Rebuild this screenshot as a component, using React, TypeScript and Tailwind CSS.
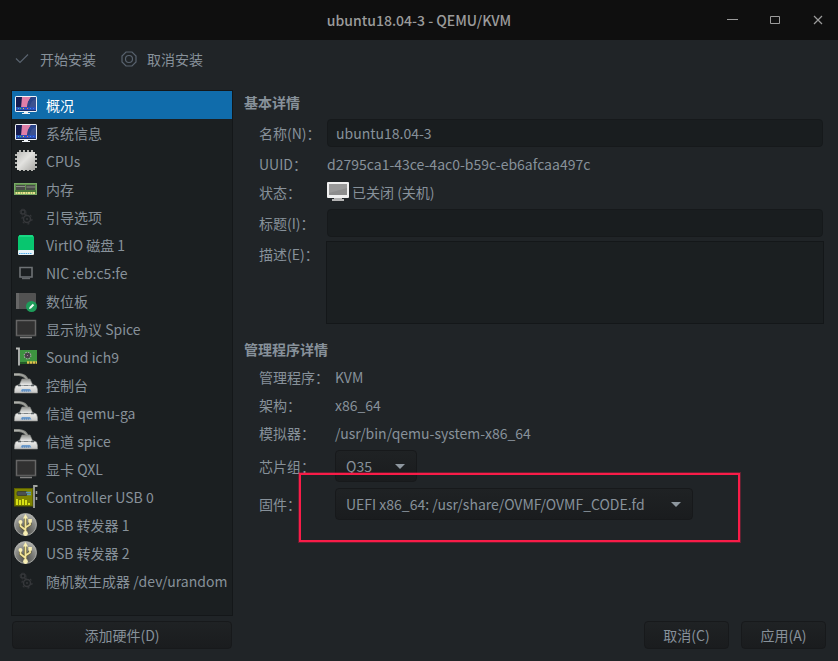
import { useState } from "react";
import type { ReactNode } from "react";

function Icon({ children }: { children: ReactNode }) {
  return (
    <svg viewBox="0 0 24 24" className="h-6 w-6 shrink-0" aria-hidden="true">
      {children}
    </svg>
  );
}

const ComputerIcon = () => (
  <Icon>
    <rect x="1" y="3" width="22" height="16" rx="1.5" fill="#eef2f7" />
    <rect x="2" y="4" width="20" height="14" fill="#1c2f6b" />
    <path d="M2 4h7L7 15H2z" fill="#151c50" />
    <path d="M8 4h9l-3 5-1 6H7z" fill="#df7fa8" />
    <path d="M17 4h5v11h-9l1-6z" fill="#2a4488" />
    <path d="M18 8l4-2v9h-7z" fill="#4a5c98" opacity=".6" />
    <rect x="2" y="14" width="20" height="3" fill="#2d52b8" />
    <g>
      <rect x="4" y="15" width="1" height="1" fill="#35d0d0" />
      <rect x="6" y="15" width="1" height="1" fill="#3fd45c" />
      <rect x="9" y="15" width="1" height="1" fill="#f3c545" />
      <rect x="11" y="15" width="1" height="1" fill="#3a36ff" />
      <rect x="13" y="15" width="1" height="1" fill="#ff7448" />
      <rect x="16" y="15" width="1" height="1" fill="#3c8cff" />
      <rect x="19" y="15" width="1" height="1" fill="#3c6cff" />
    </g>
    <path d="M10 19h4v1h2v1H8v-1h2z" fill="#eef2f7" />
  </Icon>
);

const CpuIcon = () => (
  <Icon>
    <defs>
      <linearGradient id="cpu" x1="0" y1="0" x2="1" y2="1">
        <stop offset="0" stopColor="#bdbdba" />
        <stop offset=".45" stopColor="#e2e2df" />
        <stop offset="1" stopColor="#aaa9a5" />
      </linearGradient>
    </defs>
    <path
      d="M6 1v21M10 1v21M14 1v21M18 1v21M1 6h22M1 10h22M1 14h22M1 18h22"
      stroke="#b4b5b1"
      strokeWidth="2"
    />
    <rect x="3" y="3" width="18" height="18" fill="url(#cpu)" />
  </Icon>
);

const MemoryIcon = () => (
  <Icon>
    <rect x=".5" y="6.500" width="22" height="11" fill="#5f8f4c" stroke="#78a866" />
    <rect x="2" y="8" width="19" height="5" fill="#484c47" />
    <path d="M2 9.500h9M12.500 10h9" stroke="#8b8f88" />
    <path d="M11.500 7v6" stroke="#5f8f4c" />
    <path d="M1 14h21" stroke="#35602a" />
    <path d="M1.500 16h20" stroke="#e6e08a" strokeWidth="2" strokeDasharray="2 .5" />
  </Icon>
);

const GearsIcon = () => (
  <Icon>
    <g fill="none" stroke="#35373a">
      <circle cx="9" cy="7" r="2" strokeWidth="1.500" />
      <circle cx="9" cy="7" r="3" strokeWidth="1" strokeDasharray="1.200 1.200" />
      <circle cx="13" cy="14" r="3.500" strokeWidth="1.500" />
      <circle cx="13" cy="14" r="5" strokeWidth="1.200" strokeDasharray="2 3.200" />
      <circle cx="13" cy="14" r=".7" />
    </g>
  </Icon>
);

const DiskIcon = () => (
  <Icon>
    <path d="M5.500 2h13L20 4v15.500H4V4z" fill="#08c66f" />
    <path d="M5.500 2h13L19.500 4h-15z" fill="#18d883" />
    <rect x="4" y="17" width="16" height="5" rx="1" fill="#e9f3f8" />
    <path d="M5 20.500h13" stroke="#4aa9e8" strokeDasharray="1.500 .7" />
  </Icon>
);

const NicIcon = () => (
  <Icon>
    <path d="M6 6.500h12v9.500H6z" fill="none" stroke="#6e7275" strokeWidth="1.600" />
    <path d="M8 17.500h8" stroke="#65696c" strokeWidth="1.400" />
  </Icon>
);

const TabletIcon = () => (
  <Icon>
    <rect x="2" y="4" width="20" height="16" rx="1" fill="#525252" />
    <rect x="2" y="4" width="3" height="16" fill="#666" />
    <circle cx="17.500" cy="17.500" r="5.500" fill="#1e9c5a" />
    <path d="M15 20l.6-2 3.200-3.200 1.400 1.400-3.200 3.200z" fill="#f2fff7" />
  </Icon>
);

const ScreenIcon = () => (
  <Icon>
    <rect x="2.500" y="3.500" width="19" height="15" fill="#313131" stroke="#666" strokeWidth="1.500" />
    <path d="M2 18.500h20" stroke="#5b5b5b" />
    <path d="M6 20.500h12" stroke="#838383" strokeWidth="1.500" />
  </Icon>
);

const SoundIcon = () => (
  <Icon>
    <path d="M2 3.500h3v17" fill="none" stroke="#b9bbb8" strokeWidth="1.800" />
    <path d="M6 5h17v12H6z" fill="#3d9440" />
    <path d="M6 17h7v2H6z" fill="#245c28" />
    <path d="M13 17.500h10" stroke="#dfc34a" strokeWidth="2.500" strokeDasharray="2.500 .5" />
    <circle cx="13.500" cy="10.500" r="3.300" fill="none" stroke="#b3a4b1" strokeWidth="1.200" strokeDasharray="1.300 1.300" />
    <circle cx="13.500" cy="10.500" r="2.700" fill="#49404a" />
    <circle cx="13.500" cy="10.500" r=".6" fill="#a298a2" />
  </Icon>
);

const SerialIcon = () => (
  <Icon>
    <defs>
      <linearGradient id="serial" x1="0" y1="0" x2="0" y2="1">
        <stop offset="0" stopColor="#8f918d" />
        <stop offset=".45" stopColor="#f0f0ef" />
        <stop offset="1" stopColor="#c4c5c3" />
      </linearGradient>
    </defs>
    <path d="M0 1.500h5c5 .5 7.500 3 8.500 6" fill="none" stroke="#858782" strokeWidth="2.800" />
    <path d="M0 1.500h5c5 .5 7.500 3 8.500 6" fill="none" stroke="#aeb0ab" />
    <path
      d="M8 6h8l2.500 5.500 4 1.500 1 3.500v3.500H.5v-3.500l1-3.500 4-1.500z"
      fill="url(#serial)"
      stroke="#90928f"
      strokeWidth=".6"
    />
    <path d="M5 12.500h14" stroke="#a1a4a3" />
    <path d="M4 12.500h3M17 12.500h3" stroke="#565d60" strokeWidth="1.300" />
    <path d="M10 12.500h4" stroke="#7d8284" />
    <path d="M8 16h8l1.500 2.500h-11z" fill="#6d9ccd" />
    <path d="M8 18h8" stroke="#5a80ab" strokeDasharray="1 1" />
  </Icon>
);

const ControllerIcon = () => (
  <Icon>
    <rect x=".5" y="3.500" width="18" height="17.500" fill="#7f8400" stroke="#5d6100" />
    <rect x="3" y="6.500" width="10" height="4" rx="1" fill="#4b5050" stroke="#2f3432" strokeWidth=".7" />
    <path d="M12 7.500h5M13 9.500h4" stroke="#5c93b4" strokeWidth="1.300" />
    <path d="M3 20v-6M6 20v-5M9 20v-6M12 20v-5M15 20v-2" stroke="#e2eb18" strokeWidth="1.800" />
    <path d="M23.500 1H20v22" fill="none" stroke="#a2a5a0" strokeWidth="1.800" />
    <path d="M22.500 6v3M22.500 12v3" stroke="#a2a5a0" strokeWidth="1.500" />
  </Icon>
);

const UsbIcon = () => (
  <Icon>
    <defs>
      <radialGradient id="usb" cx=".5" cy=".8" r=".85">
        <stop offset="0" stopColor="#4e4f4c" />
        <stop offset=".55" stopColor="#858682" />
        <stop offset="1" stopColor="#bcbdb9" />
      </radialGradient>
    </defs>
    <circle cx="11.500" cy="11.500" r="11" fill="url(#usb)" stroke="#b3b4b0" strokeWidth=".8" />
    <g fill="none" stroke="#5a5633" strokeWidth="3">
      <path d="M11.500 20V3M11.500 17L6.500 13V9M11.500 14.500l4.500-3V7" />
    </g>
    <g fill="none" stroke="#f1e49a" strokeWidth="1.800">
      <path d="M11.500 20V3M11.500 17L6.500 13V9M11.500 14.500l4.500-3V7" />
    </g>
    <g fill="#f8efb4">
      <path d="M11.500 1l2.500 4.500H9z" />
      <circle cx="11.500" cy="20.500" r="2.400" />
      <circle cx="6.500" cy="9" r="2" />
      <rect x="14.300" y="6" width="3.600" height="3.600" />
    </g>
  </Icon>
);

const devices = [
  { label: "概况", Glyph: ComputerIcon },
  { label: "系统信息", Glyph: ComputerIcon },
  { label: "CPUs", Glyph: CpuIcon },
  { label: "内存", Glyph: MemoryIcon },
  { label: "引导选项", Glyph: GearsIcon },
  { label: "VirtIO 磁盘 1", Glyph: DiskIcon },
  { label: "NIC :eb:c5:fe", Glyph: NicIcon },
  { label: "数位板", Glyph: TabletIcon },
  { label: "显示协议 Spice", Glyph: ScreenIcon },
  { label: "Sound ich9", Glyph: SoundIcon },
  { label: "控制台", Glyph: SerialIcon },
  { label: "信道 qemu-ga", Glyph: SerialIcon },
  { label: "信道 spice", Glyph: SerialIcon },
  { label: "显卡 QXL", Glyph: ScreenIcon },
  { label: "Controller USB 0", Glyph: ControllerIcon },
  { label: "USB 转发器 1", Glyph: UsbIcon },
  { label: "USB 转发器 2", Glyph: UsbIcon },
  { label: "随机数生成器 /dev/urandom", Glyph: GearsIcon },
];

function TitleBar() {
  return (
    <header className="grid h-10 shrink-0 grid-cols-[1fr_auto_1fr] items-center bg-[#0f0f0f] text-[#9b9b9b]">
      <h1 className="col-start-2 font-medium">ubuntu18.04-3 - QEMU/KVM</h1>
      <div className="flex justify-end gap-[15px] pr-1.5">
        <button type="button" aria-label="最小化" className="flex h-7 w-7 items-center justify-center">
          <svg viewBox="0 0 12 12" className="h-3 w-3" stroke="currentColor" fill="none">
            <path d="M1 5.500h11" />
          </svg>
        </button>
        <button type="button" aria-label="最大化" className="flex h-7 w-7 items-center justify-center">
          <svg viewBox="0 0 12 12" className="h-3 w-3" stroke="currentColor" fill="none">
            <path d="M1.500 2.500h9v7h-9z" />
          </svg>
        </button>
        <button type="button" aria-label="关闭" className="flex h-7 w-7 items-center justify-center">
          <svg viewBox="0 0 12 12" className="h-3 w-3" stroke="currentColor" fill="none">
            <path d="M2 2l8 8M10 2l-8 8" strokeWidth="1.200" />
          </svg>
        </button>
      </div>
    </header>
  );
}

function Toolbar() {
  return (
    <div className="flex h-[38px] shrink-0 items-center gap-[23px] px-3">
      <button type="button" className="flex items-center gap-2">
        <svg viewBox="0 0 20 20" className="h-5 w-5" fill="none" stroke="#59636f" aria-hidden="true">
          <path d="M4 9.500l4 4 8-8" strokeWidth="1.200" />
        </svg>
        开始安装
      </button>
      <button type="button" className="flex items-center gap-2">
        <svg viewBox="0 0 20 20" className="h-5 w-5" fill="none" stroke="#59636f" aria-hidden="true">
          <path d="M7 3h6l4 4v6l-4 4H7l-4-4V7z" strokeWidth="1.200" />
          <circle cx="10" cy="10" r="3.500" strokeWidth="1.200" />
        </svg>
        取消安装
      </button>
    </div>
  );
}

function Sidebar() {
  const [selected, setSelected] = useState(0);
  return (
    <nav className="flex w-[222px] shrink-0 flex-col gap-[5px]">
      <ul className="flex-1 border border-[#141719] bg-[#1b1f21]">
        {devices.map(({ label, Glyph }, i) => (
          <li key={label}>
            <button
              type="button"
              onClick={() => setSelected(i)}
              className={
                i === selected
                  ? "flex h-7 w-full items-center gap-2 bg-[#106cab] pl-0.5 text-white"
                  : "flex h-7 w-full items-center gap-2 pl-0.5"
              }
            >
              <Glyph />
              <span className="whitespace-nowrap">{label}</span>
            </button>
          </li>
        ))}
      </ul>
      <div className="flex flex-col px-px">
        <PushButton>添加硬件(D)</PushButton>
      </div>
    </nav>
  );
}

function PushButton({ children }: { children: ReactNode }) {
  return (
    <button
      type="button"
      className="h-7 min-w-[85px] rounded-[4px] border border-[#17191b] bg-linear-to-b from-[#1f2224] to-[#1a1c1e] px-4"
    >
      {children}
    </button>
  );
}

function Combo({ id, value, wide }: { id: string; value: string; wide?: boolean }) {
  return (
    <div className={wide ? "relative w-[358px]" : "relative w-[82px]"}>
      <select
        id={id}
        defaultValue={value}
        className="h-8 w-full appearance-none rounded-[4px] border border-[#17191b] bg-linear-to-b from-[#1f2224] to-[#1a1c1e] pl-2.5 outline-none"
      >
        <option>{value}</option>
      </select>
      <svg
        viewBox="0 0 10 5"
        className="pointer-events-none absolute top-3.5 right-3 h-[5px] w-2.5"
        fill="#8e979f"
        aria-hidden="true"
      >
        <path d="M0 0h10L5 5z" />
      </svg>
    </div>
  );
}

function Details() {
  return (
    <main className="flex min-w-0 flex-1 flex-col">
      <section className="pr-[3px]">
        <h2 className="h-[29px] leading-6 font-bold">基本详情</h2>
        <div className="grid grid-cols-[68px_1fr] items-center pl-[15px]">
          <label htmlFor="name">名称(N)：</label>
          <input
            id="name"
            defaultValue="ubuntu18.04-3"
            className="h-7 min-w-0 rounded-[4px] border border-[#16191b] bg-[#191d1f] px-2 outline-none"
          />
          <span className="leading-[34px]">UUID：</span>
          <span>d2795ca1-43ce-4ac0-b59c-eb6afcaa497c</span>
          <span className="pb-0.5 leading-[22px]">状态：</span>
          <span className="flex items-center gap-[3px] pb-0.5 leading-[22px]">
            <svg viewBox="0 0 22 20" className="h-5 w-[22px]" aria-hidden="true">
              <rect x="0" y="0" width="22" height="16" rx="1" fill="#f0f0f0" />
              <rect x="2" y="2" width="18" height="11" fill="#8d8d8d" />
              <path d="M2 2h18v4L2 11z" fill="#999" />
              <path d="M7 16h8v1h2v2H5v-2h2z" fill="#b4b4b4" />
            </svg>
            已关闭 (关机)
          </span>
          <label htmlFor="title">标题(I)：</label>
          <input
            id="title"
            className="my-1 h-7 min-w-0 rounded-[4px] border border-[#16191b] bg-[#191d1f] px-2 outline-none"
          />
          <label htmlFor="description" className="self-start leading-[26px]">
            描述(E)：
          </label>
          <textarea
            id="description"
            className="-mx-px h-[83px] resize-none border border-[#141719] bg-[#1b1f21] outline-none"
          />
        </div>
      </section>
      <section className="pt-[11px]">
        <h2 className="leading-7 font-bold">管理程序详情</h2>
        <div className="grid grid-cols-[76px_1fr] items-center pl-[15px] leading-7">
          <span>管理程序：</span>
          <span>KVM</span>
          <span>架构：</span>
          <span>x86_64</span>
          <span>模拟器：</span>
          <span>/usr/bin/qemu-system-x86_64</span>
          <label htmlFor="chipset">芯片组：</label>
          <div className="py-[3px]">
            <Combo id="chipset" value="Q35" />
          </div>
          <label htmlFor="firmware">固件：</label>
          <div className="relative py-[3px]">
            <Combo id="firmware" value="UEFI x86_64: /usr/share/OVMF/OVMF_CODE.fd" wide />
            <div className="pointer-events-none absolute -top-3 -left-9 h-[69px] w-[441px] border-2 border-[#f91c48] ring-1 ring-[#f91c48]/30" />
          </div>
        </div>
      </section>
      <div className="mt-auto flex justify-end gap-3">
        <PushButton>取消(C)</PushButton>
        <PushButton>应用(A)</PushButton>
      </div>
    </main>
  );
}

export default function App() {
  return (
    <div className="flex min-h-screen flex-col bg-[#202427] font-['Noto_Sans_CJK_SC',sans-serif] text-[14px] leading-5 text-[#87919a]">
      <TitleBar />
      <Toolbar />
      <div className="flex flex-1 gap-[11px] px-3 pt-3 pb-3 pl-[11px]">
        <Sidebar />
        <Details />
      </div>
    </div>
  );
}
